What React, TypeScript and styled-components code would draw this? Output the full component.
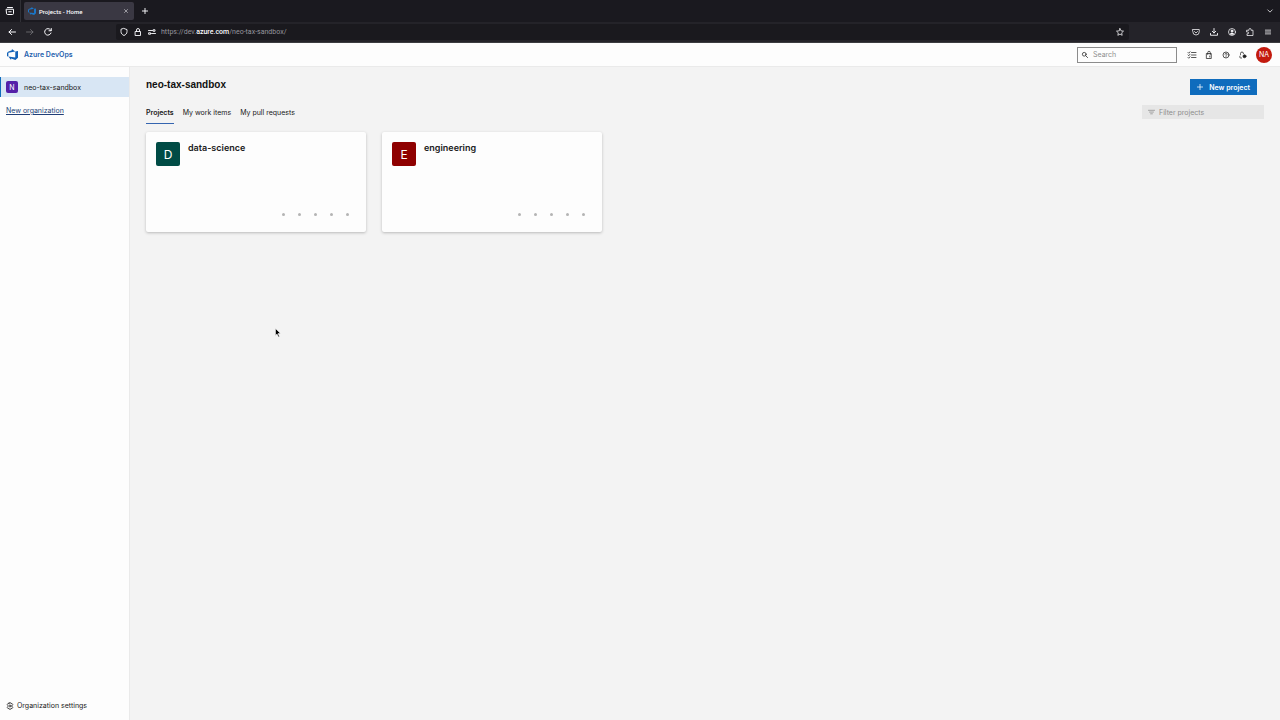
import React from "react";
import styled, { createGlobalStyle } from "styled-components";

const GlobalStyle = createGlobalStyle`
  *, *::before, *::after { box-sizing: border-box; }
  body { margin: 0; background: #f3f3f3; color: #202020; font: 7px/11px Inter, "Liberation Sans", sans-serif; }
  button, input { font: inherit; color: inherit; }
  button { border: 0; padding: 0; background: none; }
  h1, h2, ul, p { margin: 0; padding: 0; }
  ul { list-style: none; }
  svg { display: block; flex: none; }
`;

const Page = styled.div`
  display: flex;
  flex-direction: column;
  min-height: 100vh;
`;

const TabStrip = styled.div`
  display: flex;
  align-items: center;
  height: 22px;
  background: #1a191f;
  color: #fbfbfe;
`;

const RecentButton = styled.button`
  display: grid;
  place-items: center;
  width: 21px;
  height: 22px;
  border-right: 1px solid #303036;
`;

const BrowserTab = styled.div`
  display: flex;
  align-items: center;
  gap: 3px;
  width: 110px;
  height: 18px;
  margin: 0 6px 0 3px;
  padding: 0 4px;
  border-radius: 2px;
  background: #3a3843;
  font-family: Roboto, sans-serif;
  font-size: 6px;
  font-weight: 500;
`;

const TabTitle = styled.span`
  flex: 1;
`;

const IconButton = styled.button<{ $size?: number }>`
  display: grid;
  place-items: center;
  flex: none;
  width: ${(p) => p.$size ?? 10}px;
  height: ${(p) => p.$size ?? 10}px;
`;

const Spacer = styled.div`
  flex: 1;
`;

const TabListButton = styled(IconButton)`
  margin-right: 5px;
`;

const NavBar = styled.div`
  display: flex;
  align-items: center;
  height: 21px;
  padding: 0 7px;
  border-bottom: 1px solid #3c3c40;
  background: #242329;
  color: #fbfbfe;
`;

const NavButtons = styled.div`
  display: flex;
  gap: 8px;
  width: 109px;
`;

const AddressBar = styled.div`
  display: flex;
  align-items: center;
  flex: 1;
  gap: 4px;
  height: 16px;
  margin-right: 62px;
  padding: 0 4px 0 3px;
  border-radius: 2px;
  background: #1a191e;
`;

const Address = styled.div`
  flex: 1;
  color: #96959d;
  font-family: Roboto, sans-serif;
  line-height: 12px;

  b { color: #fbfbfe; font-weight: 500; }
`;

const BrowserActions = styled.div`
  display: flex;
  gap: 8px;
`;

const Header = styled.header`
  display: flex;
  align-items: center;
  height: 24px;
  padding: 0 8px 0 7px;
  border-bottom: 1px solid #eaeaea;
  background: #fdfdfd;
`;

const Brand = styled.a`
  display: flex;
  align-items: center;
  gap: 6px;
  color: #1f5fae;
  font-size: 7px;
  font-weight: 600;
  line-height: 12px;
  text-decoration: none;
`;

const SearchBox = styled.label`
  display: flex;
  align-items: center;
  gap: 5px;
  width: 100px;
  height: 16px;
  margin-right: 10px;
  padding: 0 4px;
  border: 1px solid #8c8c8c;
`;

const TextInput = styled.input`
  flex: 1;
  min-width: 0;
  height: 11px;
  padding: 0;
  border: 0;
  outline: 0;
  background: none;

  &::placeholder { color: #8d8d8d; opacity: 1; }
`;

const HeaderActions = styled.div`
  display: flex;
  gap: 7px;
  margin-right: 8px;
`;

const Avatar = styled.button`
  width: 16px;
  height: 16px;
  border-radius: 50%;
  background: #c31a0e;
  color: #fff;
`;

const Body = styled.div`
  display: flex;
  flex: 1;
`;

const Sidebar = styled.aside`
  display: flex;
  flex-direction: column;
  align-items: flex-start;
  width: 130px;
  padding: 10px 0 9px;
  border-right: 1px solid #eaeaea;
  background: #fdfdfd;
`;

const OrgLink = styled.a`
  display: flex;
  align-items: center;
  gap: 6px;
  width: 100%;
  height: 20px;
  margin-bottom: 8px;
  padding-left: 5px;
  border-left: 1px solid #0f6cbd;
  background: #d8e6f4;
  color: #202020;
  text-decoration: none;
`;

const Tile = styled.span<{ $color: string; $large?: boolean }>`
  display: grid;
  place-items: center;
  flex: none;
  width: ${(p) => (p.$large ? 24 : 12)}px;
  height: ${(p) => (p.$large ? 24 : 12)}px;
  border-radius: 2px;
  background: ${(p) => p.$color};
  color: #fff;
  font-size: ${(p) => (p.$large ? 12 : 7)}px;
`;

const NewOrgLink = styled.a`
  margin-left: 6px;
  color: #213f78;
  text-underline-offset: 1px;
`;

const SettingsLink = styled.a`
  display: flex;
  align-items: center;
  gap: 3px;
  margin: auto 0 0 6px;
  color: #202020;
  text-decoration: none;
`;

const Main = styled.main`
  flex: 1;
  padding: 12px 16px 16px;
`;

const TitleRow = styled.div`
  display: flex;
  align-items: flex-start;
  justify-content: space-between;
  height: 26px;
`;

const Title = styled.h1`
  color: #101010;
  font: bold 10px/12px "Liberation Sans", Arial, sans-serif;
`;

const NewProjectButton = styled.button`
  display: flex;
  align-items: center;
  gap: 6px;
  height: 16px;
  margin-right: 7px;
  padding: 0 7px;
  background: #0f6cbd;
  color: #fff;
  font-weight: 600;
`;

const TabRow = styled.div`
  display: flex;
  align-items: flex-start;
  justify-content: space-between;
  margin-bottom: 8px;
`;

const Tabs = styled.nav`
  display: flex;
  gap: 9px;
`;

const TabLink = styled.a<{ $active?: boolean }>`
  height: 19px;
  padding-top: 2px;
  border-bottom: 1px solid ${(p) => (p.$active ? "#3565b0" : "transparent")};
  color: #202020;
  font-weight: ${(p) => (p.$active ? 600 : 400)};
  text-decoration: none;
`;

const FilterBox = styled.label`
  display: flex;
  align-items: center;
  gap: 4px;
  width: 122px;
  height: 14px;
  padding: 0 6px;
  background: #e6e6e6;
  color: #808080;
`;

const Cards = styled.ul`
  display: flex;
  flex-wrap: wrap;
  gap: 16px;
`;

const Card = styled.li`
  display: flex;
  flex-direction: column;
  justify-content: space-between;
  width: 220px;
  min-height: 100px;
  padding: 10px 10px 16px;
  border-radius: 2px;
  background: #fdfdfd;
  box-shadow: 0 1px 3px rgba(0, 0, 0, 0.24);
`;

const CardHead = styled.div`
  display: flex;
  gap: 8px;
`;

const CardTitle = styled.h2`
  font-size: 9px;
  font-weight: 600;
  line-height: 12px;
`;

const Dots = styled.div`
  display: flex;
  justify-content: flex-end;
  gap: 13px;
  padding-right: 7px;
`;

const Dot = styled.span`
  width: 3px;
  height: 3px;
  border-radius: 50%;
  background: #b4b4b4;
`;

const Pointer = styled.svg`
  position: absolute;
  left: 275px;
  top: 328px;
`;

type IconProps = { size?: number; width?: number; children: React.ReactNode };

const Icon = ({ size = 8, width = 1.5, children }: IconProps) => (
  <svg width={size} height={size} viewBox="0 0 16 16" fill="none" stroke="currentColor"
    strokeWidth={width} strokeLinecap="round" strokeLinejoin="round" overflow="visible" aria-hidden="true">
    {children}
  </svg>
);

const DevOpsLogo = ({ size, color }: { size: number; color: string }) => (
  <svg width={size} height={size} viewBox="0 0 24 24" fill={color} aria-hidden="true">
    <path d="M0 8.877L2.247 5.91l8.405-3.416V.022l7.37 5.393L2.966 8.338v8.225L0 15.707zm24-4.45v14.651l-5.753 4.9-9.303-3.057v3.056l-5.978-7.416 15.057 1.798V5.415z" />
  </svg>
);

const projects = [
  { name: "data-science", letter: "D", color: "#004b45" },
  { name: "engineering", letter: "E", color: "#8e0000" },
];

export default function App() {
  return (
    <Page>
      <GlobalStyle />
      <TabStrip>
        <RecentButton aria-label="Recent browsing">
          <Icon width={2}><path d="M3 1h10M1 4.500h14V13a2 2 0 0 1-2 2H3a2 2 0 0 1-2-2zM5.500 9.500h5" /></Icon>
        </RecentButton>
        <BrowserTab>
          <DevOpsLogo size={8} color="#1b76c8" />
          <TabTitle>Projects - Home</TabTitle>
          <IconButton $size={8} aria-label="Close tab">
            <Icon size={4} width={2}><path d="M2 2l12 12M14 2L2 14" /></Icon>
          </IconButton>
        </BrowserTab>
        <IconButton aria-label="New tab">
          <Icon size={6} width={2.5}><path d="M8 1v14M1 8h14" /></Icon>
        </IconButton>
        <Spacer />
        <TabListButton aria-label="List all tabs">
          <Icon size={6} width={2}><path d="M2 5l6 6 6-6" /></Icon>
        </TabListButton>
      </TabStrip>

      <NavBar>
        <NavButtons>
          <IconButton aria-label="Back"><Icon width={2}><path d="M15 8H2M7 3L2 8l5 5" /></Icon></IconButton>
          <IconButton aria-label="Forward" disabled style={{ opacity: 0.4 }}>
            <Icon><path d="M1 8h13M9 3l5 5-5 5" /></Icon>
          </IconButton>
          <IconButton aria-label="Reload"><Icon width={2}><path d="M14 10A6.500 6.500 0 1 1 13 3.800L14 5M14.500 1v4.500H10" /></Icon></IconButton>
        </NavButtons>
        <AddressBar>
          <IconButton aria-label="Tracking protection">
            <Icon width={1.8}><path d="M8 1l6 2.200v4C14 11 11.500 13.500 8 15c-3.500-1.500-6-4-6-7.800v-4z" /></Icon>
          </IconButton>
          <IconButton aria-label="Connection secure">
            <Icon width={1.8}><path d="M3 7h10v8H3zM5 7V4a3 3 0 0 1 6 0v3" /></Icon>
          </IconButton>
          <IconButton aria-label="Site permissions">
            <Icon width={1.8}><path d="M1 5h8M15 11H7M11 3.500h3v3h-3zM2 9.500h3v3H2z" /></Icon>
          </IconButton>
          <Address>https://dev.<b>azure.com</b>/neo-tax-sandbox/</Address>
          <IconButton aria-label="Bookmark">
            <Icon><path d="M8 1.200l2.100 4.500 4.900.6-3.600 3.400.9 4.900L8 12.200l-4.300 2.400.9-4.900L1 6.300l4.900-.6z" /></Icon>
          </IconButton>
        </AddressBar>
        <BrowserActions>
          <IconButton aria-label="Pocket">
            <Icon><path d="M1.500 3h13v4.500a6.500 6.500 0 0 1-13 0zM5 7l3 3 3-3" /></Icon>
          </IconButton>
          <IconButton aria-label="Downloads">
            <Icon width={1.8}><path d="M8 1v9M4.500 6.500L8 10l3.500-3.500M1 11v3.500h14V11" /></Icon>
          </IconButton>
          <IconButton aria-label="Account">
            <Icon><circle cx="8" cy="8" r="7" /><circle cx="8" cy="6" r="2" fill="currentColor" /><path d="M4.500 12c0-3 7-3 7 0z" fill="currentColor" /></Icon>
          </IconButton>
          <IconButton aria-label="Extensions">
            <Icon><path d="M2 4.500h4V3a2 2 0 0 1 4 0v1.500h4V15H2v-3.500h1.500a1.700 1.700 0 0 0 0-3.500H2z" /></Icon>
          </IconButton>
          <IconButton aria-label="Application menu">
            <Icon size={6} width={2}><path d="M1 3h14M1 8h14M1 13h14" /></Icon>
          </IconButton>
        </BrowserActions>
      </NavBar>

      <Header>
        <Brand href="#"><DevOpsLogo size={11} color="#1262b8" />Azure DevOps</Brand>
        <Spacer />
        <SearchBox>
          <Icon size={6} width={2}><circle cx="6" cy="6" r="5" /><path d="M10 10l5 5" /></Icon>
          <TextInput type="text" placeholder="Search" aria-label="Search" />
        </SearchBox>
        <HeaderActions>
          <IconButton aria-label="Work items">
            <Icon><path d="M0 3l1.500 1.500L4 1.500M0 8l1.500 1.500L4 6.500M0 13l1.500 1.500L4 11.500M7 3h9M7 8h9M7 13h9" /></Icon>
          </IconButton>
          <IconButton aria-label="Marketplace">
            <Icon><path d="M3.500 5h9v10h-9zM5.500 7V3a2.500 2.500 0 0 1 5 0v4M9.500 10v2" /></Icon>
          </IconButton>
          <IconButton aria-label="Help">
            <Icon><circle cx="8" cy="8" r="6" /><path d="M6 6.500a2 2 0 1 1 3 1.700c-.8.500-1 .8-1 1.300M8 11.500v.2" /></Icon>
          </IconButton>
          <IconButton aria-label="User settings">
            <Icon><path d="M3 7V5a3 3 0 0 1 6 0M2 10c-1 2-.5 4 1.500 4H5" /><circle cx="11" cy="10.500" r="3" fill="currentColor" /></Icon>
          </IconButton>
        </HeaderActions>
        <Avatar aria-label="Account manager">NA</Avatar>
      </Header>

      <Body>
        <Sidebar>
          <OrgLink href="#"><Tile $color="#5420a8">N</Tile>neo-tax-sandbox</OrgLink>
          <NewOrgLink href="#">New organization</NewOrgLink>
          <SettingsLink href="#">
            <Icon><path d="M6.500 1.500h3l.6 1.900 2-.5 1.500 2.500L12.300 7v2l1.300 1.600-1.500 2.500-2-.5-.6 1.900h-3l-.6-1.900-2 .5-1.500-2.500L3.700 9V7L2.400 5.400l1.500-2.500 2 .5z" /><circle cx="8" cy="8" r="2" /></Icon>
            Organization settings
          </SettingsLink>
        </Sidebar>
        <Main>
          <TitleRow>
            <Title>neo-tax-sandbox</Title>
            <NewProjectButton>
              <Icon size={6} width={2}><path d="M8 1v14M1 8h14" /></Icon>
              New project
            </NewProjectButton>
          </TitleRow>
          <TabRow>
            <Tabs>
              <TabLink href="#" $active>Projects</TabLink>
              <TabLink href="#">My work items</TabLink>
              <TabLink href="#">My pull requests</TabLink>
            </Tabs>
            <FilterBox>
              <Icon size={7}><path d="M1 3h14M3.500 7h9M6 11h4" /></Icon>
              <TextInput type="text" placeholder="Filter projects" aria-label="Filter projects" />
            </FilterBox>
          </TabRow>
          <Cards>
            {projects.map((p) => (
              <Card key={p.name}>
                <CardHead>
                  <Tile $color={p.color} $large>{p.letter}</Tile>
                  <CardTitle>{p.name}</CardTitle>
                </CardHead>
                <Dots>{[0, 1, 2, 3, 4].map((i) => <Dot key={i} />)}</Dots>
              </Card>
            ))}
          </Cards>
        </Main>
      </Body>
      <Pointer width="6" height="10" viewBox="0 0 12 20" aria-hidden="true">
        <path d="M1 1v14l3-3 3 6 2-1-3-6h5z" fill="#000" stroke="#fff" />
      </Pointer>
    </Page>
  );
}
